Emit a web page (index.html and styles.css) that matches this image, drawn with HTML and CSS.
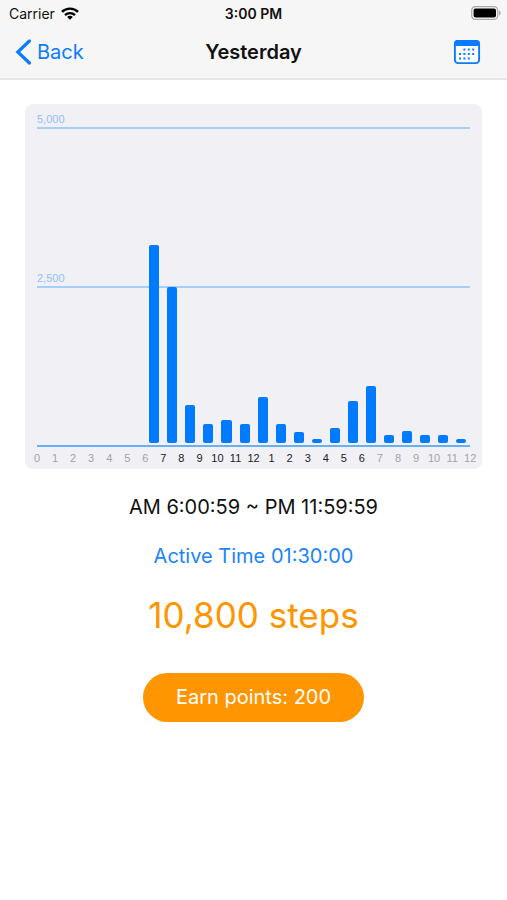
FILE: index.html
```html
<!DOCTYPE html>
<html lang="en">
<head>
    <meta charset="UTF-8">
    <meta name="viewport" content="width=device-width, initial-scale=1.0">
    <title>Yesterday</title>
    <link rel="stylesheet" href="styles.css">
</head>
<body>
    <header class="top">
        <div class="status-bar">
            <div class="carrier">
                <span>Carrier</span>
                <svg width="18" height="13" viewBox="0 0 18 13" fill="none" stroke="#000" stroke-width="2.4">
                    <path d="M1 4.9C5.4 .5 12.6 .5 17 4.9"/>
                    <path d="M4 8.1c2.8-2.7 7.2-2.7 10 0"/>
                    <path d="M9 12.8 6.1 9.9c1.6-1.5 4.2-1.5 5.8 0z" fill="#000" stroke="none"/>
                </svg>
            </div>
            <span class="clock">3:00 PM</span>
            <svg class="battery" width="30" height="14" viewBox="0 0 30 14">
                <rect x=".7" y=".7" width="26" height="12.6" rx="3.6" fill="#f7f6f7" stroke="#aaa" stroke-width="1.2"/>
                <rect x="2.6" y="2.4" width="22.4" height="9.2" rx="2" fill="#000"/>
                <path d="M28 4.6c2.2.9 2.2 3.9 0 4.8z" fill="#aaa"/>
            </svg>
        </div>
        <nav class="nav-bar">
            <a class="back" href="#">
                <svg width="17" height="26" viewBox="0 0 17 26" fill="none" stroke="#0a7cff" stroke-width="3.2" stroke-linecap="round">
                    <path d="M14.4 2 2.8 13 14.4 24"/>
                </svg>
                Back
            </a>
            <h1>Yesterday</h1>
            <button class="calendar-btn" aria-label="Calendar">
                <svg width="28" height="26" viewBox="0 0 28 26">
                    <rect x="1.9" y="1.9" width="24.2" height="22.2" rx="3.2" fill="#fff" stroke="#0a7cff" stroke-width="1.9"/>
                    <path d="M1 7V4.6A3.6 3.6 0 0 1 4.6 1h18.8A3.6 3.6 0 0 1 27 4.6V7z" fill="#0a7cff"/>
                    <g fill="#0a7cff">
                        <path d="M10.4 9.6h2v2h-2zM14.8 9.6h2v2h-2zM19.2 9.6h2v2h-2z"/>
                        <path d="M6 14h2v2H6zM10.4 14h2v2h-2zM14.8 14h2v2h-2zM19.2 14h2v2h-2z"/>
                        <path d="M6 18.4h2v2H6zM10.4 18.4h2v2h-2zM14.8 18.4h2v2h-2z"/>
                    </g>
                </svg>
            </button>
        </nav>
    </header>

    <main>
        <section class="chart">
            <div class="scale">5,000</div>
            <div class="plot">
                <div class="lines">
                    <div class="line"><span class="scale">2,500</span></div>
                    <div class="line"></div>
                </div>
                <div class="bars">
                    <i></i><i></i><i></i><i></i><i></i><i></i>
                    <i style="height: 62.7%"></i>
                    <i style="height: 49.4%"></i>
                    <i style="height: 12%"></i>
                    <i style="height: 6%"></i>
                    <i style="height: 7.3%"></i>
                    <i style="height: 6%"></i>
                    <i style="height: 14.5%"></i>
                    <i style="height: 6%"></i>
                    <i style="height: 3.5%"></i>
                    <i style="height: 1.2%"></i>
                    <i style="height: 4.8%"></i>
                    <i style="height: 13.3%"></i>
                    <i style="height: 18%"></i>
                    <i style="height: 2.5%"></i>
                    <i style="height: 3.7%"></i>
                    <i style="height: 2.5%"></i>
                    <i style="height: 2.5%"></i>
                    <i style="height: 1.2%"></i>
                </div>
            </div>
            <div class="hours">
                <span>0</span><span>1</span><span>2</span><span>3</span><span>4</span><span>5</span><span>6</span>
                <span class="active">7</span><span class="active">8</span><span class="active">9</span><span class="active">10</span><span class="active">11</span><span class="active">12</span>
                <span class="active">1</span><span class="active">2</span><span class="active">3</span><span class="active">4</span><span class="active">5</span><span class="active">6</span>
                <span>7</span><span>8</span><span>9</span><span>10</span><span>11</span><span>12</span>
            </div>
        </section>

        <p class="period">AM 6:00:59 ~ PM 11:59:59</p>
        <p class="active-time">Active Time 01:30:00</p>
        <p class="steps">10,800 steps</p>
        <button class="earn-btn">Earn points: 200</button>
    </main>
</body>
</html>
```

FILE: styles.css
```css
body {
    font-family: Inter, "Liberation Sans", sans-serif;
    margin: 0;
    background: #fff;
    color: #111;
}
button {
    font-family: inherit;
    border: none;
    cursor: pointer;
}
.top {
    background: #f7f6f7;
    border-bottom: 2px solid #e6e5e6;
}
.status-bar, .nav-bar {
    display: grid;
    grid-template-columns: 1fr auto 1fr;
    align-items: center;
}
.status-bar {
    height: 26px;
    font-size: 14px;
}
.carrier {
    display: flex;
    align-items: center;
    gap: 6px;
    padding-left: 9px;
}
.clock {
    font-weight: 600;
}
.battery {
    justify-self: end;
    margin-right: 6px;
}
.nav-bar {
    height: 52px;
}
.back {
    display: flex;
    align-items: center;
    gap: 5px;
    padding-left: 15px;
    color: #0a7cff;
    font-size: 20px;
    text-decoration: none;
}
h1 {
    margin: 0;
    font-size: 20px;
    font-weight: 600;
}
.calendar-btn {
    display: flex;
    justify-self: end;
    margin-right: 26px;
    padding: 0;
    background: none;
}
main {
    display: flex;
    flex-direction: column;
    align-items: center;
    padding: 24px 25px;
}
.chart {
    box-sizing: border-box;
    width: 100%;
    padding: 8px 3px 0;
    background: #f1f0f5;
    border-radius: 8px;
    font-family: "Liberation Sans", Arial, sans-serif;
    font-size: 11px;
}
.scale {
    color: #8fc0f8;
    line-height: 15px;
}
.chart > .scale, .plot {
    margin: 0 9px;
}
.plot {
    display: grid;
    height: 318px;
    border-bottom: 2px solid #69b0fa;
}
.lines, .bars {
    grid-area: 1 / 1;
    display: flex;
}
.lines {
    flex-direction: column;
}
.line {
    flex: 1;
    display: flex;
    align-items: flex-end;
    border-top: 2px solid #a9cef6;
}
.bars {
    align-items: flex-end;
    padding-bottom: 2px;
}
.bars i {
    flex: 1;
    margin: 0 4px;
    background: #007aff;
    border-radius: 2px;
}
.hours {
    display: flex;
    line-height: 22px;
    color: #a3a3a7;
}
.hours span {
    flex: 1 1 0;
    text-align: center;
}
.hours .active {
    color: #222;
}
p {
    margin: 0;
    font-size: 20px;
    line-height: 24px;
}
.period {
    margin-top: 26px;
}
.active-time {
    margin-top: 25px;
    color: #1a84f8;
}
.steps {
    margin-top: 25px;
    color: #ff9500;
    font-size: 35px;
    line-height: 44px;
}
.earn-btn {
    margin-top: 36px;
    padding: 12px 33px;
    background: #ff9500;
    border-radius: 25px;
    color: #fff;
    font-size: 20px;
    line-height: 25px;
}
```
